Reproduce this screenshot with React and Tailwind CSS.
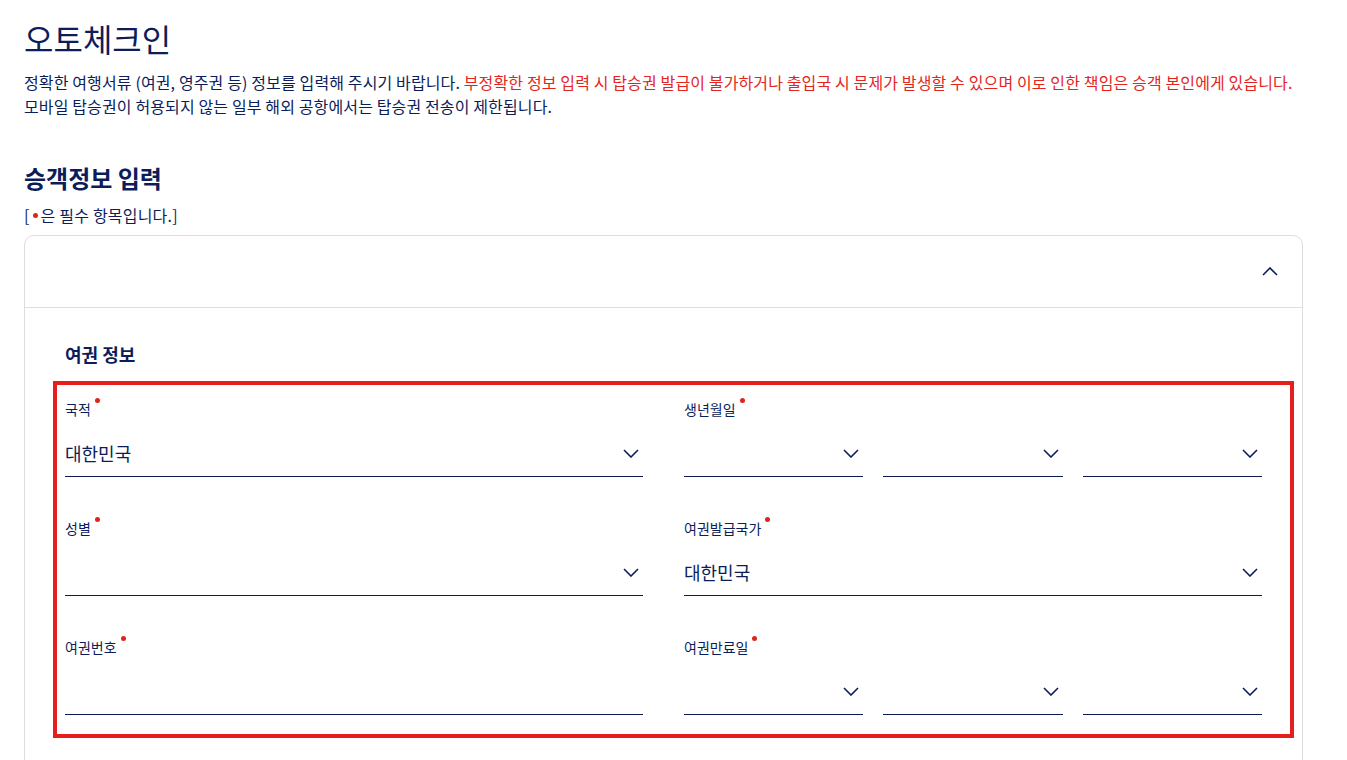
import React from "react";

const NAVY = "text-[#0c1d5a]";

function ChevronDown() {
  return (
    <svg width="16" height="9" viewBox="0 0 16 9" fill="none" className="shrink-0">
      <polyline points="1,1 8,8 15,1" stroke="#0c1d5a" strokeWidth="1.6" fill="none" />
    </svg>
  );
}

function ChevronUp() {
  return (
    <svg width="16" height="9" viewBox="0 0 16 9" fill="none">
      <polyline points="1,8 8,1 15,8" stroke="#0c1d5a" strokeWidth="1.6" fill="none" />
    </svg>
  );
}

function Label({ children }) {
  return (
    <div className="h-5 flex items-start text-[14px] leading-5 text-[#0c1d5a]">
      <span>{children}</span>
      <span className="ml-[4px] mt-[-1px] w-[5px] h-[5px] rounded-full bg-[#e0231c]" />
    </div>
  );
}

function SelectBox({ value }) {
  return (
    <div className="h-[58px] border-b border-[#0c1a50] flex items-center justify-between pt-[11px] pr-[4px]">
      <span className="text-[18px] text-[#0c1d5a]">{value}</span>
      <ChevronDown />
    </div>
  );
}

function InputBox() {
  return <div className="h-[58px] border-b border-[#0c1a50]" />;
}

function Field({ label, children }) {
  return (
    <div>
      <Label>{label}</Label>
      {children}
    </div>
  );
}

function DateSelects() {
  return (
    <div className="grid grid-cols-3 gap-x-5">
      <SelectBox value="" />
      <SelectBox value="" />
      <SelectBox value="" />
    </div>
  );
}

export default function App() {
  return (
    <div
      className={`min-h-screen bg-white px-6 pt-4 ${NAVY}`}
      style={{ fontFamily: '"Noto Sans CJK KR", "Noto Sans", sans-serif' }}
    >
      <h1 className="text-[32px] leading-[45px] font-normal">오토체크인</h1>
      <p className="mt-[9px] text-[16px] leading-6 tracking-[0.13px] whitespace-nowrap">
        정확한 여행서류 (여권, 영주권 등) 정보를 입력해 주시기 바랍니다.{" "}
        <span className="text-[#e4251e]">
          부정확한 정보 입력 시 탑승권 발급이 불가하거나 출입국 시 문제가 발생할 수 있으며 이로 인한 책임은 승객 본인에게 있습니다.
        </span>
        <br />
        모바일 탑승권이 허용되지 않는 일부 해외 공항에서는 탑승권 전송이 제한됩니다.
      </p>

      <h2 className="mt-[44px] text-[24px] leading-8 font-bold">승객정보 입력</h2>
      <p className="mt-[9px] text-[16px] leading-6 tracking-[0.2px] flex items-center">
        [<span className="inline-block w-[5px] h-[5px] rounded-full bg-[#e0231c] mx-[3px]" />은 필수 항목입니다.]
      </p>

      <div className="mt-2 w-[1279px] border border-[#dedede] rounded-[10px] pb-20">
        <div className="h-[72px] border-b border-[#dedede] flex items-center justify-end pr-6">
          <ChevronUp />
        </div>
        <div className="px-10 pt-[33px]">
          <h3 className="text-[18px] leading-[26px] font-bold">여권 정보</h3>
          <div className="relative mt-8">
            <div className="grid grid-cols-2 gap-x-[41px] gap-y-[41px]">
              <Field label="국적">
                <SelectBox value="대한민국" />
              </Field>
              <Field label="생년월일">
                <DateSelects />
              </Field>
              <Field label="성별">
                <SelectBox value="" />
              </Field>
              <Field label="여권발급국가">
                <SelectBox value="대한민국" />
              </Field>
              <Field label="여권번호">
                <InputBox />
              </Field>
              <Field label="여권만료일">
                <DateSelects />
              </Field>
            </div>
            <div className="absolute top-[-18px] bottom-[-23px] left-[-12px] right-[-32px] border-4 border-[#e61e1e] pointer-events-none" />
          </div>
        </div>
      </div>
    </div>
  );
}
